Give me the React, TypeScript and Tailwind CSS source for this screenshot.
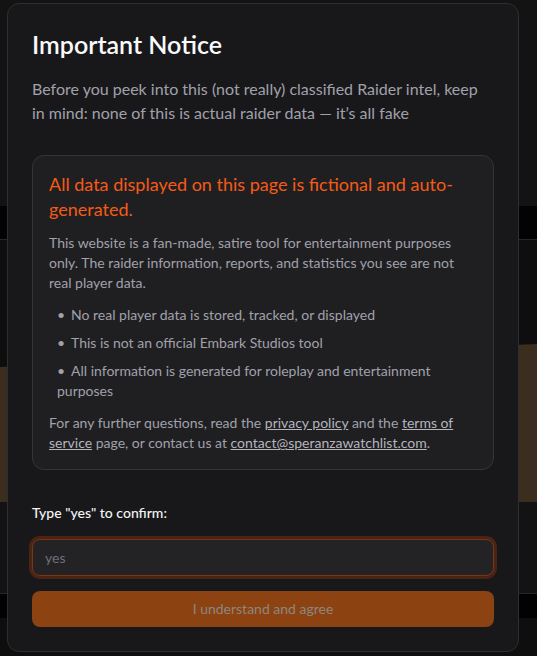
import { useState } from "react";

const App = () => {
    const [answer, setAnswer] = useState("");
    const confirmed = answer.trim().toLowerCase() === "yes";

    const points: string[] = [
        "No real player data is stored, tracked, or displayed",
        "This is not an official Embark Studios tool",
        "All information is generated for roleplay and entertainment purposes",
    ];

    return (
        <div className="relative w-full h-[656px] overflow-hidden bg-[#0e0e0e] font-['Lato','Liberation_Sans',sans-serif]">
            {/* page behind the overlay */}
            <div className="absolute inset-0 flex flex-col">
                <div className="h-[206px] bg-[#131314]" />
                <div className="h-[34px] bg-[#030303] border-b border-[#262626]" />
                <div className="h-[262px] relative">
                    <svg className="absolute inset-0" width="537" height="262" viewBox="0 0 537 262">
                        <polygon points="0,127 537,104 537,262 0,262" fill="#3b2e1f" />
                    </svg>
                </div>
                <div className="h-[92px] bg-[#131313] border-b border-[#262626]" />
                <div className="h-[24px] bg-[#020202]" />
                <div className="flex-1 bg-[#0e0e0e]" />
            </div>

            {/* modal */}
            <div className="absolute left-[7px] top-[3px] w-[512px] rounded-xl border border-[#2e2e32] bg-[#18181b] p-6 text-[#a1a1aa]">
                <h2 className="text-[25px] leading-8 font-semibold text-[#fafafa]">Important Notice</h2>
                <p className="mt-[17px] text-base leading-6">
                    Before you peek into this (not really) classified Raider intel, keep in mind: none of this is actual raider data — it’s all fake
                </p>

                {/* disclaimer card */}
                <div className="mt-[30px] rounded-xl border border-[#34343a] bg-[#1f1f22] p-4 space-y-3 text-sm leading-5">
                    <p className="text-lg leading-[24.5px] text-[#f55a16]">
                        All data displayed on this page is fictional and auto-generated.
                    </p>
                    <p>
                        This website is a fan-made, satire tool for entertainment purposes only. The raider information, reports, and statistics you see are not real player data.
                    </p>
                    <ul className="pl-2 space-y-2">
                        {points.map((p) => (
                            <li key={p}>
                                <span className="inline-block w-[14px]">•</span>
                                {p}
                            </li>
                        ))}
                    </ul>
                    <p>
                        For any further questions, read the{" "}
                        <a href="#" className="underline text-[#b4b4bc]">privacy policy</a> and the{" "}
                        <a href="#" className="underline text-[#b4b4bc]">terms of service</a> page, or contact us at{" "}
                        <a href="#" className="underline text-[#b4b4bc]">contact@speranzawatchlist.com</a>.
                    </p>
                </div>

                {/* confirm */}
                <label className="block mt-[33px] text-sm leading-5 font-medium text-[#f4f4f5]">Type "yes" to confirm:</label>
                <input
                    autoFocus
                    value={answer}
                    onChange={(e) => setAnswer(e.target.value)}
                    placeholder="yes"
                    className="mt-4 block w-full h-[37px] rounded-lg border border-[#7a3416] bg-[#232326] px-3 text-sm text-[#f4f4f5] placeholder:text-[#6f6f78] outline-none ring-[3px] ring-[#4a2312] caret-white"
                />
                <button
                    disabled={!confirmed}
                    className="mt-[15px] w-full h-9 rounded-lg bg-[#8c4311] text-sm text-[#8e8680] disabled:cursor-not-allowed"
                >
                    I understand and agree
                </button>
            </div>
        </div>
    );
};

export default App;
